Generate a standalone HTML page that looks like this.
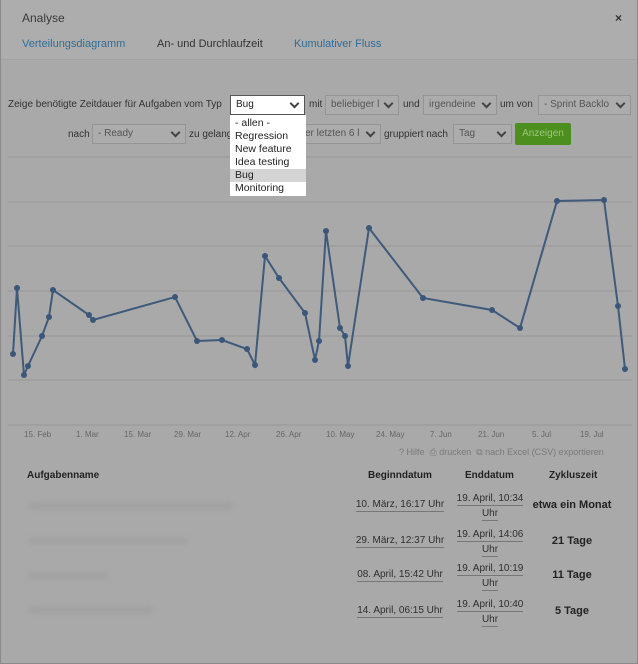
<!DOCTYPE html>
<html><head><meta charset="utf-8">
<style>
*{box-sizing:border-box;margin:0;padding:0}
body{width:638px;height:664px;background:#a9a9a9;font-family:"Liberation Sans",sans-serif;position:relative;overflow:hidden;color:#333}
.frame{position:absolute;left:0;top:0;width:638px;height:664px;border:1px solid #8a8a8a;border-top:none}
.head{position:absolute;left:0;top:0;width:638px;height:60px;background:#adadad;border-bottom:1px solid #a2a2a2}
.t{position:absolute;white-space:nowrap}
.sel{position:absolute;height:20px;border:1px solid #959595;background:#acacac;font-size:10px;color:#555;padding:3px 5px;white-space:nowrap;overflow:hidden}
.sel:after{content:"";position:absolute;right:6px;top:4px;width:5px;height:5px;border-right:2px solid #444;border-bottom:2px solid #444;transform:rotate(45deg)}
.dd{position:absolute;left:230px;top:115px;width:76px;height:81px;background:#fff;font-size:10.5px;color:#222;padding-top:2px}
.dd div{height:13px;line-height:13px;padding-left:5px}
.sm{font-size:9px;color:#7a7a7a}
.blur{position:absolute;height:8px;background:#a2a2a2;filter:blur(2px);border-radius:4px}
.d{position:absolute;font-size:10px;color:#2e2e2e;text-align:center;width:100px;white-space:nowrap}
.d span{border-bottom:1px solid #777;padding-bottom:1px}
.z{position:absolute;font-size:11px;font-weight:bold;color:#222;text-align:center;width:90px}
</style></head><body>
<div class="head"></div>
<div class="frame"></div>
<div class="t" style="left:22px;top:11px;font-size:12px;color:#3a3a3a">Analyse</div>
<div class="t" style="left:615px;top:11px;font-size:12px;font-weight:bold;color:#333">×</div>
<div class="t" style="left:22px;top:38px;font-size:11px;color:#2f6e99">Verteilungsdiagramm</div>
<div class="t" style="left:157px;top:38px;font-size:11px;color:#333">An- und Durchlaufzeit</div>
<div class="t" style="left:294px;top:38px;font-size:11px;color:#2f6e99">Kumulativer Fluss</div>

<div class="t" style="left:8px;top:99px;font-size:10px;color:#333">Zeige benötigte Zeitdauer für Aufgaben vom Typ</div>
<div class="sel" style="left:230px;top:95px;width:75px;background:#fff;border-color:#555;color:#222">Bug</div>
<div class="t" style="left:309px;top:99px;font-size:10px">mit</div>
<div class="sel" style="left:325px;top:95px;width:74px">beliebiger l</div>
<div class="t" style="left:403px;top:99px;font-size:10px">und</div>
<div class="sel" style="left:423px;top:95px;width:74px">irgendeine</div>
<div class="t" style="left:500px;top:99px;font-size:10px">um von</div>
<div class="sel" style="left:538px;top:95px;width:93px">- Sprint Backlo</div>

<div class="t" style="left:68px;top:129px;font-size:10px">nach</div>
<div class="sel" style="left:92px;top:124px;width:94px">- Ready</div>
<div class="t" style="left:189px;top:129px;font-size:10px">zu gelangen</div>
<div class="sel" style="left:296px;top:124px;width:85px;padding-left:8px">er letzten 6 l</div>
<div class="t" style="left:384px;top:129px;font-size:10px">gruppiert nach</div>
<div class="sel" style="left:453px;top:124px;width:59px">Tag</div>
<div style="position:absolute;left:515px;top:123px;width:56px;height:22px;background:#4c8f1e;border-radius:2px;color:#9cc681;font-size:10px;text-align:center;line-height:22px">Anzeigen</div>

<svg style="position:absolute;left:0;top:150px" width="638" height="290">
<g stroke="#9b9b9b" stroke-width="1.2">
<line x1="8" x2="632" y1="7" y2="7"/><line x1="8" x2="632" y1="52" y2="52"/><line x1="8" x2="632" y1="96" y2="96"/><line x1="8" x2="632" y1="141" y2="141"/><line x1="8" x2="632" y1="186" y2="186"/><line x1="8" x2="632" y1="230" y2="230"/><line x1="8" x2="632" y1="275" y2="275"/>
</g>
<g transform="translate(0,-150)">
<polyline fill="none" stroke="#3f5a7a" stroke-width="2" points="13,354 17,288 24,375 28,366 42,336 49,317 53,290 89,315 93,320 175,297 197,341 222,340 247,349 255,365 265,256 279,278 305,313 315,360 319,341 326,231 340,328 345,336 348,366 369,228 423,298 492,310 520,328 557,201 604,200 618,306 625,369"/>
<g fill="#3a577a">
<circle cx="13" cy="354" r="3"/><circle cx="17" cy="288" r="3"/><circle cx="24" cy="375" r="3"/><circle cx="28" cy="366" r="3"/><circle cx="42" cy="336" r="3"/><circle cx="49" cy="317" r="3"/><circle cx="53" cy="290" r="3"/><circle cx="89" cy="315" r="3"/><circle cx="93" cy="320" r="3"/><circle cx="175" cy="297" r="3"/><circle cx="197" cy="341" r="3"/><circle cx="222" cy="340" r="3"/><circle cx="247" cy="349" r="3"/><circle cx="255" cy="365" r="3"/><circle cx="265" cy="256" r="3"/><circle cx="279" cy="278" r="3"/><circle cx="305" cy="313" r="3"/><circle cx="315" cy="360" r="3"/><circle cx="319" cy="341" r="3"/><circle cx="326" cy="231" r="3"/><circle cx="340" cy="328" r="3"/><circle cx="345" cy="336" r="3"/><circle cx="348" cy="366" r="3"/><circle cx="369" cy="228" r="3"/><circle cx="423" cy="298" r="3"/><circle cx="492" cy="310" r="3"/><circle cx="520" cy="328" r="3"/><circle cx="557" cy="201" r="3"/><circle cx="604" cy="200" r="3"/><circle cx="618" cy="306" r="3"/><circle cx="625" cy="369" r="3"/>
</g></g>
<g font-family="Liberation Sans" font-size="8" fill="#666">
<text x="24" y="287">15. Feb</text><text x="76" y="287">1. Mar</text><text x="124" y="287">15. Mar</text><text x="174" y="287">29. Mar</text><text x="225" y="287">12. Apr</text><text x="276" y="287">26. Apr</text><text x="326" y="287">10. May</text><text x="376" y="287">24. May</text><text x="430" y="287">7. Jun</text><text x="478" y="287">21. Jun</text><text x="532" y="287">5. Jul</text><text x="580" y="287">19. Jul</text>
</g>
</svg>

<div class="t sm" style="left:399px;top:447px">? Hilfe &nbsp;⎙ drucken &nbsp;⧉ nach Excel (CSV) exportieren</div>

<div class="t" style="left:27px;top:470px;font-size:10px;font-weight:bold;color:#222">Aufgabenname</div>
<div class="t" style="left:368px;top:470px;font-size:10px;font-weight:bold;color:#222">Beginndatum</div>
<div class="t" style="left:465px;top:470px;font-size:10px;font-weight:bold;color:#222">Enddatum</div>
<div class="t" style="left:549px;top:470px;font-size:10px;font-weight:bold;color:#222">Zykluszeit</div>

<div class="blur" style="left:28px;top:502px;width:205px"></div>
<div class="blur" style="left:28px;top:537px;width:160px"></div>
<div class="blur" style="left:28px;top:572px;width:80px"></div>
<div class="blur" style="left:28px;top:606px;width:125px"></div>

<div class="d" style="left:350px;top:499px"><span>10. März, 16:17 Uhr</span></div>
<div class="d" style="left:440px;top:491px;line-height:15px"><span>19. April, 10:34</span><br><span>Uhr</span></div>
<div class="z" style="left:527px;top:499px">etwa ein Monat</div>

<div class="d" style="left:350px;top:535px"><span>29. März, 12:37 Uhr</span></div>
<div class="d" style="left:440px;top:527px;line-height:15px"><span>19. April, 14:06</span><br><span>Uhr</span></div>
<div class="z" style="left:527px;top:535px">21 Tage</div>

<div class="d" style="left:350px;top:569px"><span>08. April, 15:42 Uhr</span></div>
<div class="d" style="left:440px;top:561px;line-height:15px"><span>19. April, 10:19</span><br><span>Uhr</span></div>
<div class="z" style="left:527px;top:569px">11 Tage</div>

<div class="d" style="left:350px;top:605px"><span>14. April, 06:15 Uhr</span></div>
<div class="d" style="left:440px;top:597px;line-height:15px"><span>19. April, 10:40</span><br><span>Uhr</span></div>
<div class="z" style="left:527px;top:605px">5 Tage</div>

<div class="dd">
<div>- allen -</div><div>Regression</div><div>New feature</div><div>Idea testing</div><div style="background:#d4d4d4">Bug</div><div>Monitoring</div>
</div>
</body></html>
